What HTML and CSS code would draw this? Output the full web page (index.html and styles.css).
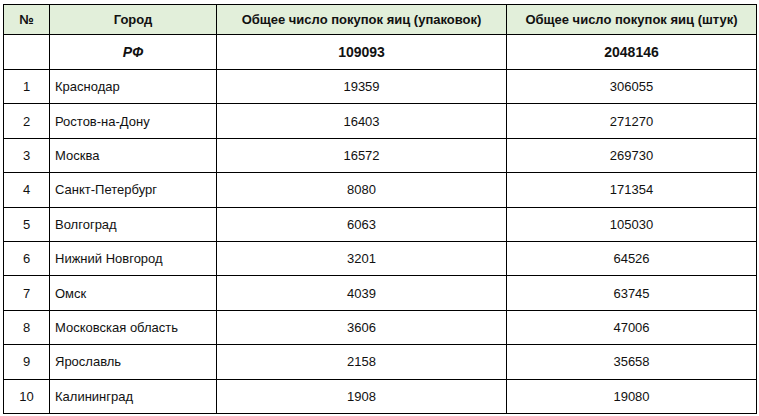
FILE: index.html
```html
<!DOCTYPE html>
<html lang="ru">
<head>
<meta charset="utf-8">
<link rel="stylesheet" href="styles.css">
</head>
<body>
<div class="page">
<table class="data">
  <colgroup>
    <col class="c-num"><col class="c-city"><col class="c-pack"><col class="c-pcs">
  </colgroup>
  <thead>
    <tr class="head">
      <th>№</th>
      <th>Город</th>
      <th>Общее число покупок яиц (упаковок)</th>
      <th>Общее число покупок яиц (штук)</th>
    </tr>
  </thead>
  <tbody>
    <tr class="total">
      <td></td>
      <td class="rf">РФ</td>
      <td>109093</td>
      <td>2048146</td>
    </tr>
    <tr><td>1</td><td class="city">Краснодар</td><td>19359</td><td>306055</td></tr>
    <tr><td>2</td><td class="city">Ростов-на-Дону</td><td>16403</td><td>271270</td></tr>
    <tr><td>3</td><td class="city">Москва</td><td>16572</td><td>269730</td></tr>
    <tr><td>4</td><td class="city">Санкт-Петербург</td><td>8080</td><td>171354</td></tr>
    <tr><td>5</td><td class="city">Волгоград</td><td>6063</td><td>105030</td></tr>
    <tr><td>6</td><td class="city">Нижний Новгород</td><td>3201</td><td>64526</td></tr>
    <tr><td>7</td><td class="city">Омск</td><td>4039</td><td>63745</td></tr>
    <tr><td>8</td><td class="city">Московская область</td><td>3606</td><td>47006</td></tr>
    <tr><td>9</td><td class="city">Ярославль</td><td>2158</td><td>35658</td></tr>
    <tr><td>10</td><td class="city">Калининград</td><td>1908</td><td>19080</td></tr>
  </tbody>
</table>
</div>
</body>
</html>
```
FILE: styles.css
```css
html, body {
  margin: 0;
  padding: 0;
  background: #ffffff;
}
.page {
  padding: 4px 0 0 3px;
}
.data {
  border-collapse: collapse;
  table-layout: fixed;
  width: 753px;
  font-family: "Liberation Sans", Arial, sans-serif;
  font-size: 13px;
  color: #111;
}
.c-num { width: 46px; }
.c-city { width: 167px; }
.c-pack { width: 290px; }
.c-pcs { width: 250px; }
.data th, .data td {
  border: 1px solid #000;
  padding: 0;
  text-align: center;
  vertical-align: middle;
}
.head th {
  background: #e2efda;
  font-weight: bold;
  font-size: 13px;
  height: 29px;
}
.total td {
  font-weight: bold;
  font-size: 14px;
  height: 34px;
}
.total .rf {
  font-style: italic;
}
.data tbody tr:not(.total) td {
  height: 33.4px;
}
.data td.city {
  text-align: left;
  padding-left: 5px;
}
```
